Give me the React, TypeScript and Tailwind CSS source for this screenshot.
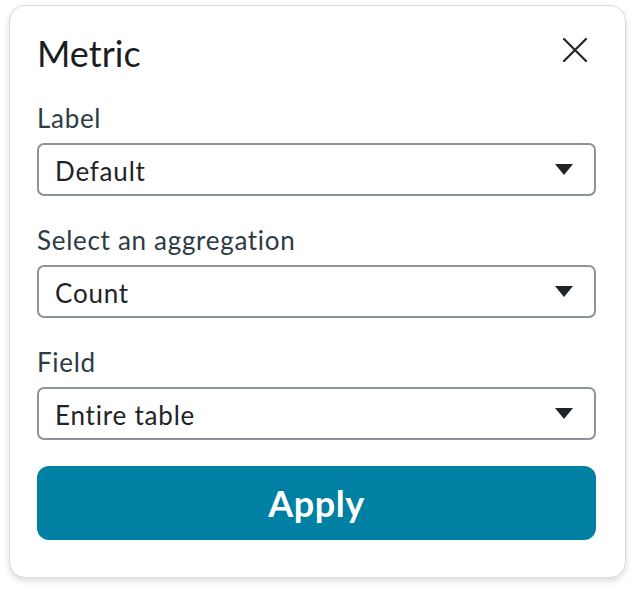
const selects = [
  { label: 'Label', value: 'Default' },
  { label: 'Select an aggregation', value: 'Count' },
  { label: 'Field', value: 'Entire table' },
];

function Caret() {
  return (
    <svg width="18" height="11" viewBox="0 0 18 11" className="shrink-0">
      <path d="M0 0h18L9 11z" fill="#1f2428" />
    </svg>
  );
}

function SelectField({ label, value }: { label: string; value: string }) {
  return (
    <div className="flex flex-col">
      <span className="text-[26px] leading-[31px] tracking-[0.7px] text-[#2d3b45]">{label}</span>
      <div className="mt-[9px] flex h-[53px] items-center justify-between rounded-[7px] border-2 border-[#8b939e] bg-white pl-[16px] pr-[21px]">
        <span className="pt-[4px] text-[26px] leading-[31px] tracking-[0.8px] text-[#1f2428]">{value}</span>
        <Caret />
      </div>
    </div>
  );
}

export default function App() {
  return (
    <div className="min-h-screen bg-white font-['Lato','Noto_Sans',sans-serif]">
      <div className="ml-[9px] mt-[5px] w-[617px] rounded-[16px] border border-[#d9dce0] bg-white pb-[37px] pl-[27px] pr-[29px] pt-[26px] shadow-[0_3px_6px_rgba(0,0,0,0.14)]">
        {/* Header */}
        <div className="flex items-start justify-between">
          <h1 className="text-[36px] leading-[43px] text-[#1b1e21]">Metric</h1>
          <button className="mr-[9px] mt-[6px] flex h-[24px] w-[24px] items-center justify-center">
            <svg width="24" height="24" viewBox="0 0 24 24">
              <path d="M1 1L23 23M23 1L1 23" stroke="#1f2428" strokeWidth="2.2" strokeLinecap="round" />
            </svg>
          </button>
        </div>

        <div className="mt-[28px] flex flex-col gap-[29px]">
          {selects.map((s) => (
            <SelectField key={s.label} label={s.label} value={s.value} />
          ))}
        </div>

        <button className="mt-[26px] flex h-[74px] w-full items-center justify-center rounded-[12px] bg-[#0081a3] text-[36px] font-bold tracking-[0.5px] text-white">
          Apply
        </button>
      </div>
    </div>
  );
}
